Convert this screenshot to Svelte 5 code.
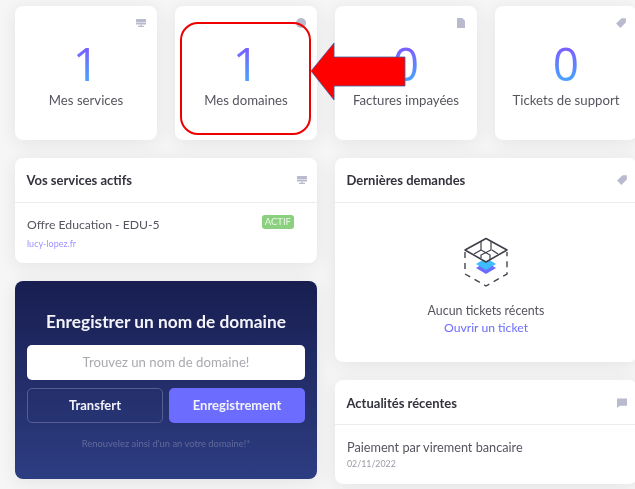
<script>
  const stats = [
    { n: '1', label: 'Mes services', icon: 'server' },
    { n: '1', label: 'Mes domaines', icon: 'globe' },
    { n: '0', label: 'Factures impayées', icon: 'doc' },
    { n: '0', label: 'Tickets de support', icon: 'tag' }
  ];
</script>

{#snippet icon(name)}
  <svg class="ico" width="12" height="12" viewBox="0 0 12 12" fill="#b9bace">
    {#if name === 'server'}
      <rect x="1" y="2" width="10" height="3" rx="0.6" />
      <rect x="1" y="5.6" width="10" height="2" rx="0.6" />
      <rect x="5.3" y="7.6" width="1.4" height="1.4" />
      <rect x="3" y="8.8" width="6" height="1.2" />
    {:else if name === 'globe'}
      <circle cx="6" cy="6" r="5" />
    {:else if name === 'doc'}
      <path d="M2 1h5.2L10 3.8V11H2z" />
    {:else if name === 'tag'}
      <path d="M6.6 1.2h4.2v4.2L5.4 10.9 1.1 6.6z" />
    {:else}
      <path d="M1 1.5h10v7.2H3.8L1 11z" />
    {/if}
  </svg>
{/snippet}

<div class="page">
  <section class="stats">
    {#each stats as s}
      <article class="card stat">
        <div class="stat-icon">{@render icon(s.icon)}</div>
        <div class="num">{s.n}</div>
        <div class="label">{s.label}</div>
      </article>
    {/each}
  </section>

  <section class="cols">
    <div class="col">
      <article class="card">
        <header class="head"><h2>Vos services actifs</h2>{@render icon('server')}</header>
        <div class="service">
          <div class="svc-row">
            <span class="svc-name">Offre Education - EDU-5</span>
            <span class="badge">ACTIF</span>
          </div>
          <a class="link small" href="#a">lucy-lopez.fr</a>
        </div>
      </article>

      <article class="card domain">
        <h2>Enregistrer un nom de domaine</h2>
        <div class="input">Trouvez un nom de domaine!</div>
        <div class="btns">
          <button class="btn ghost">Transfert</button>
          <button class="btn primary">Enregistrement</button>
        </div>
        <p class="note">Renouvelez ainsi d'un an votre domaine!*</p>
      </article>
    </div>

    <div class="col">
      <article class="card">
        <header class="head"><h2>Dernières demandes</h2>{@render icon('tag')}</header>
        <div class="empty">
          <svg width="46" height="52" viewBox="0 0 46 52" fill="none">
            <path d="M2 15v22l21 12 21-12V15" stroke="#45454f" stroke-width="1.4" stroke-dasharray="6 5" />
            <path d="M23 25l10 6-10 6-10-6z" fill="#6c6cff" />
            <path d="M23 21l10 6-10 6-10-6z" fill="#3dbdfd" />
            <path d="M23 1.5L44 13 23 25 2 13z" fill="#fff" stroke="#3d3d47" stroke-width="1.5" stroke-linejoin="round" />
            <path d="M18 4v9l9 5v5M28 5v8l-10 5v3M11 17l7-4M29 13l6 4" stroke="#3d3d47" stroke-width="1.2" />
          </svg>
          <p class="none">Aucun tickets récents</p>
          <a class="link open" href="#b">Ouvrir un ticket</a>
        </div>
      </article>

      <article class="card">
        <header class="head news-head"><h2>Actualités récentes</h2>{@render icon('chat')}</header>
        <div class="news">
          <div class="news-title">Paiement par virement bancaire</div>
          <div class="date">02/11/2022</div>
        </div>
      </article>
    </div>
  </section>

  <div class="callout"></div>
  <svg class="arrow" width="100" height="62" viewBox="0 0 100 62">
    <path d="M1 29L24 1v14h71v29H24v14z" fill="#ff0000" stroke="#3f5f9f" stroke-width="0.8" />
  </svg>
</div>

<style>
  :global(body) {
    margin: 0;
    background: #f6f6f7;
  }
  .page {
    position: relative;
    width: 635px;
    height: 489px;
    overflow: hidden;
    box-sizing: border-box;
    padding: 6px 0 0 15px;
    background: #f6f6f7;
    font-family: Lato, "Noto Sans", sans-serif;
    color: #55555f;
    filter: blur(0.45px);
  }
  .stats {
    display: grid;
    grid-template-columns: repeat(4, 142px);
    gap: 18px;
    width: 640px;
  }
  .card {
    background: #fff;
    border-radius: 8px;
    box-shadow: 0 3px 18px rgba(40, 40, 60, 0.09);
    overflow: hidden;
  }
  .stat {
    position: relative;
    height: 134px;
    text-align: center;
  }
  .stat-icon {
    position: absolute;
    top: 11px;
    right: 10px;
    line-height: 0;
  }
  .num {
    margin-top: 31px;
    font-family: "Open Sans", sans-serif;
    font-size: 46px;
    line-height: 52px;
    font-weight: 400;
    background: linear-gradient(180deg, #7a5fff 22%, #4c9dff 78%);
    -webkit-background-clip: text;
    background-clip: text;
    color: transparent;
  }
  .label {
    margin-top: 2px;
    font-size: 13.2px;
    line-height: 18px;
  }
  .cols {
    display: grid;
    grid-template-columns: 302px 302px;
    gap: 18px;
    margin-top: 18px;
    width: 640px;
  }
  .col {
    display: flex;
    flex-direction: column;
    gap: 18px;
  }
  .head {
    display: flex;
    align-items: center;
    justify-content: space-between;
    height: 44px;
    padding: 0 9px 0 11.5px;
    border-bottom: 1px solid #ececf0;
  }
  .news-head {
    padding-top: 1px;
    height: 43px;
  }
  .head h2 {
    margin: 0;
    font-size: 13px;
    font-weight: 700;
    color: #33333d;
  }
  .service {
    height: 60px;
    box-sizing: border-box;
    padding: 12px 23px 0 12px;
  }
  .svc-row {
    display: flex;
    justify-content: space-between;
    align-items: flex-start;
  }
  .svc-name {
    font-size: 12.2px;
    line-height: 20px;
  }
  .badge {
    margin-top: 0;
    padding: 0 3px;
    height: 14px;
    line-height: 14px;
    font-size: 9.5px;
    color: #e8f6e6;
    background: #8ad07f;
    border-radius: 3px;
  }
  .link {
    color: #6c6cff;
    text-decoration: none;
  }
  .small {
    display: block;
    margin-top: 3px;
    font-size: 9px;
    color: #9c92ff;
  }
  .domain {
    height: 198px;
    box-sizing: border-box;
    padding: 30px 12px 0;
    background: linear-gradient(180deg, #181e50, #2d3d82);
    text-align: center;
  }
  .domain h2 {
    margin: 0;
    font-size: 17.3px;
    line-height: 22px;
    font-weight: 700;
    color: #f4f4fa;
  }
  .input {
    margin-top: 12px;
    height: 35px;
    line-height: 35px;
    background: #fff;
    border-radius: 5px;
    font-size: 13.2px;
    color: #a9a9af;
  }
  .btns {
    display: grid;
    grid-template-columns: 136px 136px;
    gap: 6px;
    margin-top: 8px;
  }
  .btn {
    height: 35px;
    padding: 0 0 1px;
    border-radius: 5px;
    font: 700 13px Lato, sans-serif;
    color: #f2f2fb;
    cursor: pointer;
  }
  .ghost {
    background: transparent;
    border: 1px solid #565f92;
  }
  .primary {
    background: #6c6cff;
    border: 0;
  }
  .note {
    margin: 14px 0 0;
    font-size: 9.4px;
    line-height: 14px;
    color: #62699b;
  }
  .empty {
    height: 159px;
    box-sizing: border-box;
    padding-top: 34px;
    text-align: center;
    line-height: 0;
  }
  .none {
    margin: 13px 0 0;
    font-size: 12.4px;
    line-height: 17px;
  }
  .open {
    display: block;
    font-size: 12.2px;
    line-height: 17px;
    margin-top: 0;
  }
  .news {
    height: 59px;
    box-sizing: border-box;
    padding: 12px 12px 0;
  }
  .news-title {
    font-size: 12.7px;
    line-height: 20px;
  }
  .date {
    margin-top: 1px;
    font-size: 8.8px;
    line-height: 12px;
    color: #9a9aa4;
  }
  .callout {
    position: absolute;
    left: 180px;
    top: 22px;
    width: 127px;
    height: 109px;
    border: 2px solid #ee0000;
    border-radius: 18px;
  }
  .arrow {
    position: absolute;
    left: 310px;
    top: 42px;
  }
</style>
